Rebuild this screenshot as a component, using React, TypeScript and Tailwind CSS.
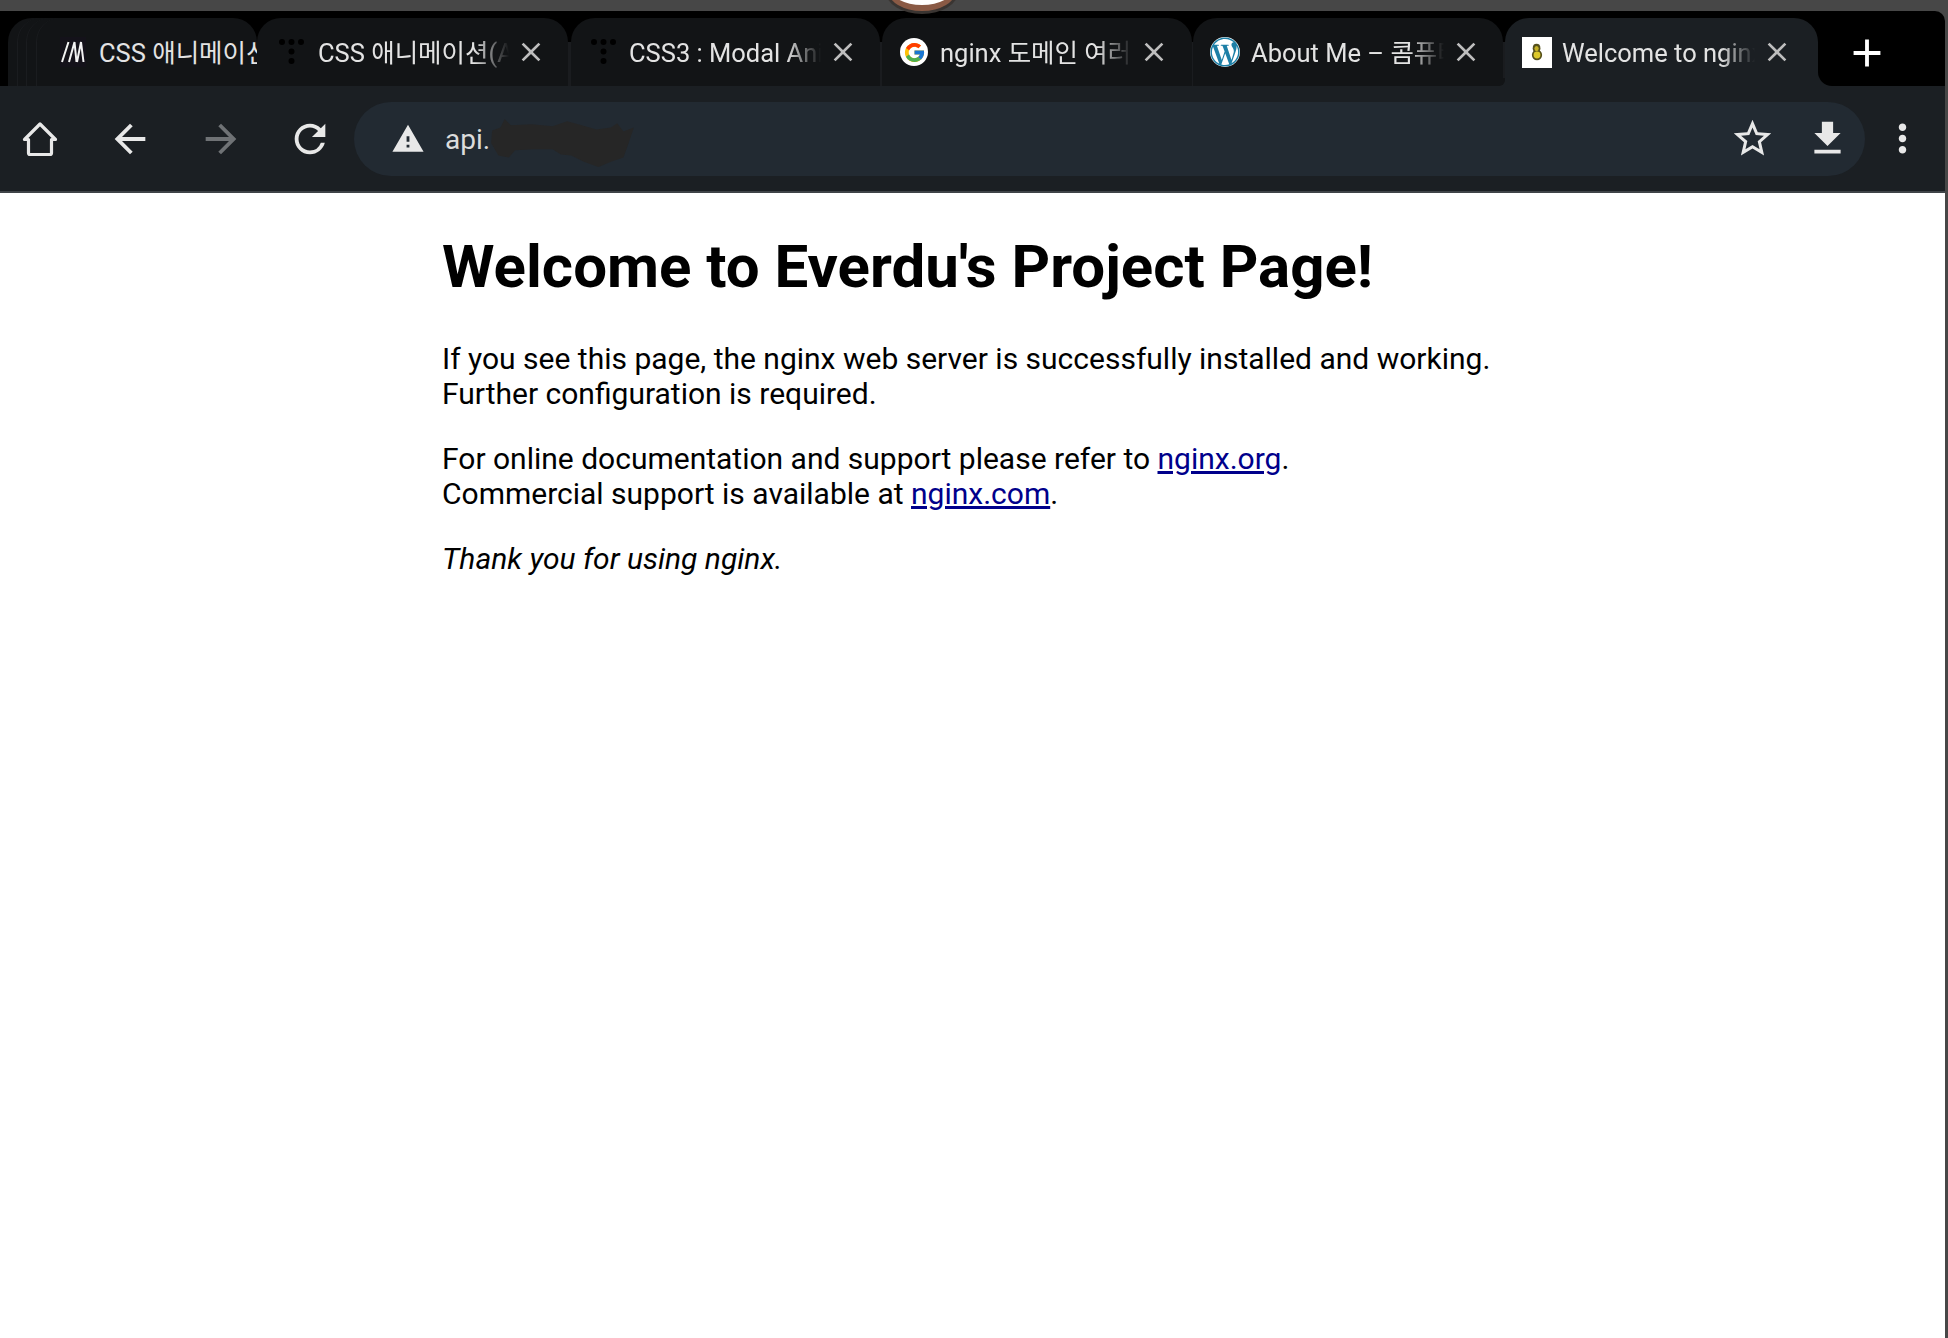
import type { ReactNode } from "react"
import { FaWordpressSimple } from "react-icons/fa"
import { FcGoogle } from "react-icons/fc"
import {
  MdAdd,
  MdArrowBack,
  MdArrowForward,
  MdClose,
  MdFileDownload,
  MdMoreVert,
  MdRefresh,
  MdStarBorder,
  MdWarning,
} from "react-icons/md"

const FONT = "font-['Roboto','Noto_Sans_CJK_KR',sans-serif]"

function DotsIcon() {
  return (
    <svg width="32" height="32" viewBox="0 0 32 32" className="shrink-0">
      <g fill="#000">
        <circle cx="6" cy="6" r="3" />
        <circle cx="15.5" cy="6" r="3" />
        <circle cx="25" cy="6" r="3" />
        <circle cx="15.5" cy="15.5" r="3" />
        <circle cx="15.5" cy="25" r="3" />
      </g>
    </svg>
  )
}

function MediumIcon() {
  return (
    <div className="w-[26px] h-[30px] bg-[#14121a] flex items-center justify-center shrink-0">
      <svg width="24" height="22" viewBox="0 0 24 22">
        <path d="M1 21 L7.5 1 M8 21 L13.5 1 L15.5 21 M16 21 L20 1 L22.5 21" fill="none" stroke="#f2f2f2" strokeWidth="2" />
      </svg>
    </div>
  )
}

function GoogleIcon() {
  return (
    <div className="w-[28px] h-[28px] rounded-full bg-white flex items-center justify-center shrink-0">
      <FcGoogle size={23} />
    </div>
  )
}

function WordpressIcon() {
  return (
    <div className="w-[30px] h-[30px] rounded-full bg-white flex items-center justify-center shrink-0">
      <FaWordpressSimple size={30} color="#1d7fa6" />
    </div>
  )
}

function NginxIcon() {
  return (
    <div className="w-[30px] h-[31px] bg-white flex items-center justify-center shrink-0">
      <svg width="12" height="20" viewBox="0 0 14 20">
        <ellipse cx="6.5" cy="5.5" rx="4.5" ry="5" fill="#55501c" />
        <ellipse cx="7" cy="13.5" rx="6" ry="6" fill="#55501c" />
        <ellipse cx="6.5" cy="6" rx="2.5" ry="3" fill="#c4b026" />
        <ellipse cx="7" cy="13.5" rx="4" ry="4" fill="#dcc82a" />
      </svg>
    </div>
  )
}

type TabProps = {
  icon: ReactNode
  title: string
  width: string
  pad: string
  gap: string
  active?: boolean
}

function Tab({ icon, title, width, pad, gap, active }: TabProps) {
  return (
    <div
      className={`relative flex items-center h-[68px] rounded-t-[24px] ${width} ${pad} ${
        active ? "bg-[#1b1f23]" : "bg-[#121416]"
      }`}
    >
      {icon}
      <div
        className={`flex-1 min-w-0 mt-[1px] overflow-hidden whitespace-nowrap text-[25.5px] leading-[34px] text-[#e3e3e3] [mask-image:linear-gradient(to_right,#000_82%,transparent_100%)] ${gap}`}
      >
        {title}
      </div>
      <MdClose size={32} className="shrink-0 ml-[6px] text-[#bdbdbd]" />
      {active && (
        <>
          <div className="absolute left-full bottom-0 w-[14px] h-[14px] bg-[#1b1f23]">
            <div className="w-full h-full bg-black rounded-bl-[14px]" />
          </div>
          <div className="absolute right-full bottom-0 w-[6px] h-[8px] bg-[#1b1f23]">
            <div className="w-full h-full bg-[#121416] rounded-br-[6px]" />
          </div>
        </>
      )}
    </div>
  )
}

// faint seam between two tabs, black only where the round corners meet
function TabGap({ width }: { width: string }) {
  return <div className={`${width} mt-[24px] h-[44px] shrink-0 bg-[#1a1c1f]`} />
}

function HomeIcon() {
  return (
    <svg width="46" height="46" viewBox="0 0 46 46" fill="none" className="shrink-0">
      <path
        d="M23 8 L7.5 23.5 H11.5 V37 a1.5 1.5 0 0 0 1.5 1.5 H33 a1.5 1.5 0 0 0 1.5 -1.5 V23.5 H38.5 Z"
        stroke="#e8e8e8"
        strokeWidth="3.2"
        strokeLinejoin="round"
      />
    </svg>
  )
}

function Scribble() {
  return (
    <svg width="150" height="50" viewBox="0 0 144 48" preserveAspectRatio="none" className="shrink-0 -ml-[2px] mt-[8px]">
      <path
        d="M4 12 L12 9 L16 1 L22 7 L42 6 L62 8 L76 3 L90 7 L104 11 L118 9 L124 5 L130 13 L140 9 L135 24 L130 38 L118 42 L106 47 L92 42 L80 36 L70 35 L62 30 L44 30 L26 31 L20 38 L10 36 L3 24 Z"
        fill="#262626"
      />
    </svg>
  )
}

export default function App() {
  return (
    <div className={`relative min-h-[1338px] bg-[#474747] flex ${FONT}`}>
      {/* camera notch poking in from the top */}
      <div className="absolute left-[880px] top-0 w-[84px] h-[16px] overflow-hidden z-10">
        <div className="absolute left-[6px] -top-[30px] w-[72px] h-[44px] rounded-[50%] bg-[#3a3532]" />
        <div className="absolute left-[8px] -top-[30px] w-[68px] h-[41px] rounded-[50%] bg-[#8a5a45]" />
        <div className="absolute left-[10px] -top-[30px] w-[64px] h-[35px] rounded-[50%] bg-white" />
      </div>

      <div className="flex-1 min-w-0 flex flex-col pt-[11px]">
        {/* Tab strip */}
        <div className="bg-black rounded-tr-[10px] pt-[7px] h-[75px] flex items-start overflow-hidden shrink-0">
          <div className="relative ml-[8px] w-[249px] shrink-0 h-[68px] flex pl-[52px]">
            <div className="absolute left-0 top-0 bottom-0 w-[90px] rounded-t-[24px] bg-[#121416]" />
            <div className="absolute left-[9px] top-0 bottom-0 w-[90px] rounded-t-[24px] bg-[#121416] border-l border-[#1a1c1f]" />
            <div className="absolute left-[18px] top-0 bottom-0 w-[90px] rounded-t-[24px] bg-[#121416] border-l border-[#1a1c1f]" />
            <div className="absolute left-[28px] top-0 bottom-0 w-[221px] rounded-t-[24px] bg-[#121416] border-l border-[#1a1c1f]" />
            <div className="relative flex items-center h-full w-full overflow-hidden">
              <MediumIcon />
              <div className="ml-[13px] mt-[1px] whitespace-nowrap text-[25.5px] leading-[34px] text-[#e3e3e3]">
                CSS 애니메이션(Animation)
              </div>
            </div>
          </div>
          <Tab icon={<DotsIcon />} title="CSS 애니메이션(Animation)" width="w-[311px] shrink-0" pad="pl-[19px] pr-[21px]" gap="ml-[10px]" />
          <TabGap width="w-[3px]" />
          <Tab icon={<DotsIcon />} title="CSS3 : Modal Animation" width="w-[309px] shrink-0" pad="pl-[17px] pr-[21px]" gap="ml-[9px]" />
          <TabGap width="w-[2px]" />
          <Tab icon={<GoogleIcon />} title="nginx 도메인 여러개 설정" width="w-[310px] shrink-0" pad="pl-[18px] pr-[22px]" gap="ml-[12px]" />
          <TabGap width="w-[1px]" />
          <Tab icon={<WordpressIcon />} title="About Me – 콤퓨타 블로그" width="w-[310px] shrink-0" pad="pl-[17px] pr-[21px]" gap="ml-[11px]" />
          <TabGap width="w-[2px]" />
          <Tab active icon={<NginxIcon />} title="Welcome to nginx!" width="w-[313px] shrink-0" pad="pl-[17px] pr-[25px]" gap="ml-[10px]" />
          <MdAdd size={46} className="shrink-0 ml-[26px] mt-[12px] text-white" />
        </div>

        {/* Toolbar */}
        <div className="h-[105px] bg-[#1b1f23] flex items-center pl-[17px] shrink-0">
          <HomeIcon />
          <MdArrowBack size={46} className="shrink-0 ml-[44px] text-[#e8e8e8]" />
          <MdArrowForward size={46} className="shrink-0 ml-[45px] text-[#6f7275]" />
          <MdRefresh size={46} className="shrink-0 ml-[43px] text-[#e8e8e8]" />
          <div className="ml-[21px] flex-1 min-w-0 h-[74px] rounded-full bg-[#222a32] flex items-center pl-[37px] pr-[15px]">
            <MdWarning size={34} className="shrink-0 text-[#e8e8e8]" />
            <span className="ml-[20px] mt-[2px] text-[28px] text-[#dcdcdc]">api.</span>
            <Scribble />
            <MdStarBorder size={45} className="ml-auto shrink-0 text-[#e8e8e8]" />
            <MdFileDownload size={45} className="ml-[30px] shrink-0 text-[#e8e8e8]" />
          </div>
          <MdMoreVert size={45} className="shrink-0 ml-[15px] mr-[20px] text-[#e8e8e8]" />
        </div>
        <div className="h-[2px] bg-[#3f4448] shrink-0" />

        {/* Page */}
        <main className="flex-1 bg-white text-black pl-[442px] pt-[40px]">
          <h1 className="text-[60px] leading-[68px] font-bold">Welcome to Everdu's Project Page!</h1>
          <p className="mt-[40px] text-[30px] leading-[35px]">
            If you see this page, the nginx web server is successfully installed and working.
            <br />
            Further configuration is required.
          </p>
          <p className="mt-[30px] text-[30px] leading-[35px]">
            For online documentation and support please refer to{" "}
            <a href="#" className="text-[#00008b] underline">nginx.org</a>.
            <br />
            Commercial support is available at{" "}
            <a href="#" className="text-[#00008b] underline">nginx.com</a>.
          </p>
          <p className="mt-[30px] text-[30px] leading-[35px] italic">Thank you for using nginx.</p>
        </main>
      </div>
      <div className="w-[3px] shrink-0" />
    </div>
  )
}
